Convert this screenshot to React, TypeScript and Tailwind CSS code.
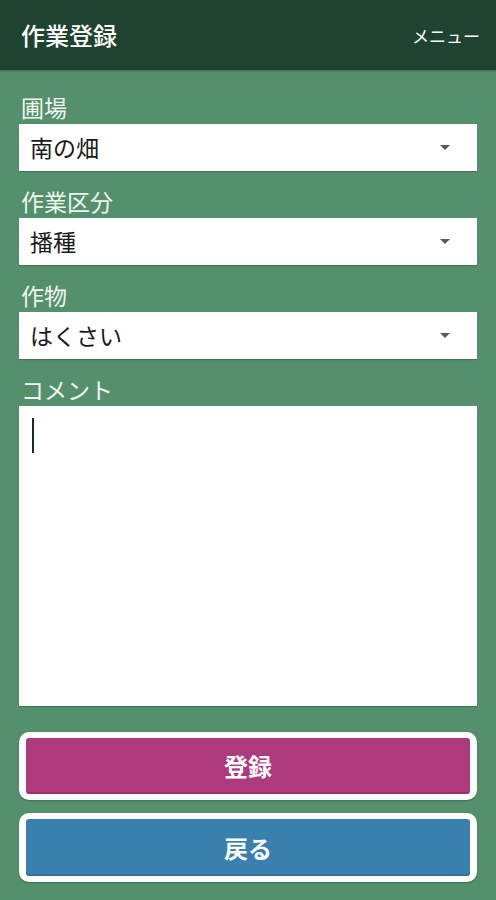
import React from "react"

const fields = [
  { label: "圃場", value: "南の畑" },
  { label: "作業区分", value: "播種" },
  { label: "作物", value: "はくさい" },
]

const SelectBox = ({ value }: { value: string }) => (
  <div className="flex h-[47px] items-center justify-between bg-white pl-[11px] pr-[27px] shadow-[0_1px_1px_rgba(0,0,0,0.2)]">
    <span className="text-[23px] leading-none text-[#1a1a1a]">{value}</span>
    <span className="h-0 w-0 border-x-[5px] border-t-[5px] border-x-transparent border-t-[#5a5a5a]" />
  </div>
)

export default function App() {
  return (
    <div
      className="flex h-[900px] w-full flex-col bg-[#55906c]"
      style={{ fontFamily: '"Noto Sans CJK JP", "Noto Sans", sans-serif' }}
    >
      {/* Header */}
      <div className="flex h-[70px] shrink-0 items-center justify-between bg-[#1f4331] pl-[21px] pr-[16px] shadow-[0_1px_2px_rgba(0,0,0,0.3)]">
        <h1 className="text-[24px] font-medium leading-none text-white">作業登録</h1>
        <span className="text-[17px] leading-none text-white">メニュー</span>
      </div>

      {/* Form */}
      <div className="flex flex-col px-[19px] pt-[24px]">
        {fields.map((f) => (
          <div key={f.label} className="mb-[17px] flex flex-col">
            <label className="h-[30px] pl-[2px] text-[23px] leading-[26px] text-[#eef6ef]">{f.label}</label>
            <SelectBox value={f.value} />
          </div>
        ))}

        <div className="flex flex-col">
          <label className="h-[30px] pl-[2px] text-[23px] leading-[26px] text-[#eef6ef]">コメント</label>
          <div className="h-[300px] bg-white pl-[13px] pt-[12px] shadow-[0_1px_1px_rgba(0,0,0,0.2)]">
            <span className="block h-[35px] w-[2px] bg-[#1d2a22]" />
          </div>
        </div>

        {/* Buttons */}
        <div className="mt-[26px] rounded-[10px] bg-white px-[7px] py-[6px] shadow-[0_1px_2px_rgba(0,0,0,0.25)]">
          <button className="flex h-[56px] w-full items-center justify-center rounded-[3px] bg-[#ad3a7d] text-[24px] font-bold text-white shadow-[inset_0_-2px_0_rgba(0,0,0,0.12)]">
            登録
          </button>
        </div>
        <div className="mt-[13px] rounded-[10px] bg-white px-[7px] py-[6px] shadow-[0_1px_2px_rgba(0,0,0,0.25)]">
          <button className="flex h-[57px] w-full items-center justify-center rounded-[3px] bg-[#3a80ad] text-[24px] font-bold text-white shadow-[inset_0_-2px_0_rgba(0,0,0,0.12)]">
            戻る
          </button>
        </div>
      </div>
    </div>
  )
}
